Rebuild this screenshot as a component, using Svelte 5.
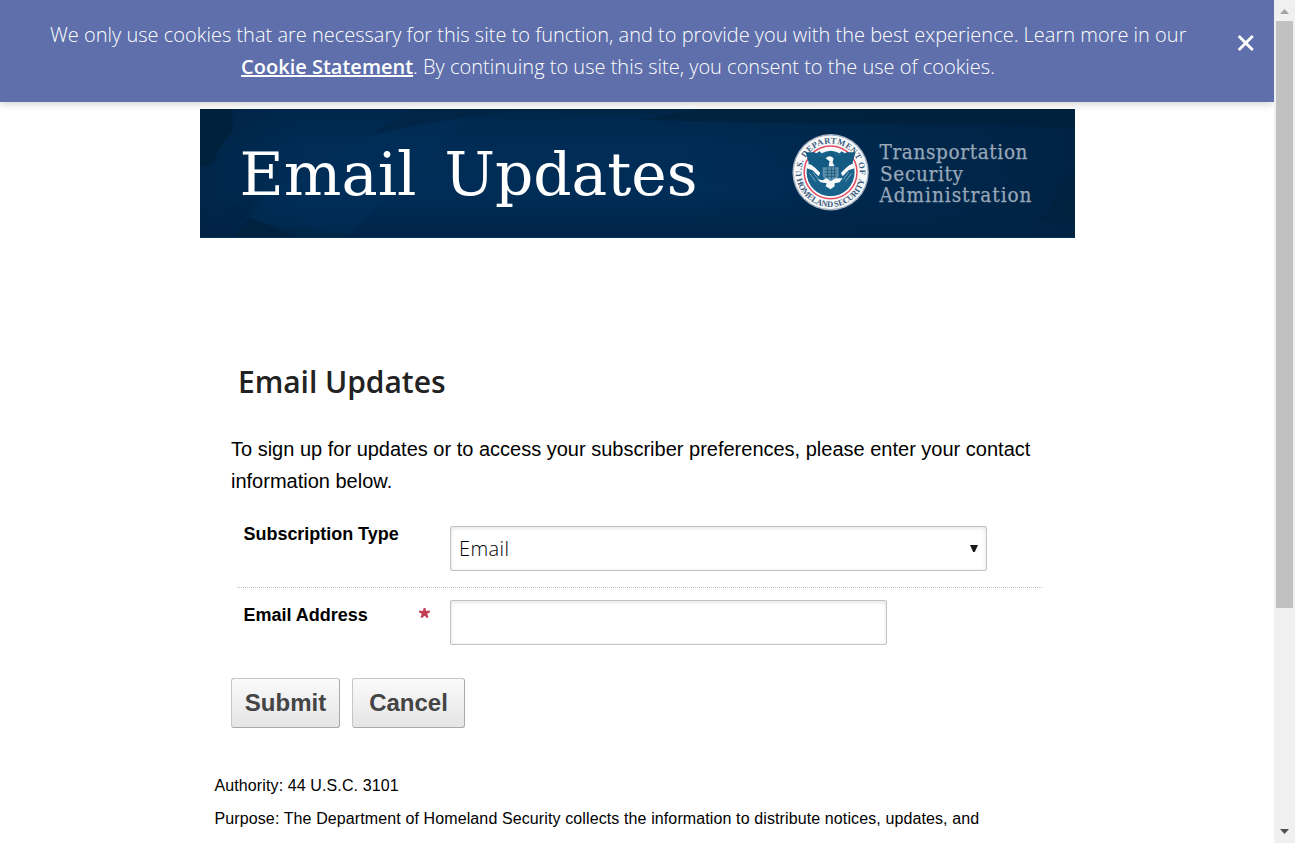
<script>
  const notices = [
    'Authority: 44 U.S.C. 3101',
    'Purpose: The Department of Homeland Security collects the information to distribute notices, updates, and'
  ];
</script>

<div class="window">
  <div class="page">
    <div class="cookies">
      <p>
        <span class="line first">We only use cookies that are necessary for this site to function, and to provide you with the best experience. Learn more in our</span>
        <span class="line second"><a href="#cookies">Cookie Statement</a>. By continuing to use this site, you consent to the use of cookies.</span>
      </p>
      <svg class="close" width="18" height="18" viewBox="0 0 18 18"><path d="M1.8 1.8L16.2 16.2M16.2 1.8L1.8 16.2" stroke="#fff" stroke-width="3" /></svg>
    </div>

    <svg class="banner" width="875" height="129" viewBox="0 0 875 129">
      <defs>
        <linearGradient id="base" x1="0" y1="0" x2="0" y2="1">
          <stop offset="0" stop-color="#00274b" />
          <stop offset=".3" stop-color="#002c55" />
          <stop offset=".65" stop-color="#002d57" />
          <stop offset="1" stop-color="#002446" />
        </linearGradient>
        <linearGradient id="side" x1="0" y1="0" x2="1" y2="0">
          <stop offset=".55" stop-color="#002344" stop-opacity="0" />
          <stop offset="1" stop-color="#002344" />
        </linearGradient>
        <linearGradient id="left" x1="0" y1="0" x2="1" y2="0">
          <stop offset="0" stop-color="#002344" stop-opacity=".8" />
          <stop offset=".12" stop-color="#002344" stop-opacity="0" />
        </linearGradient>
        <path id="arc-top" d="M-28.9 4.5A29.2 29.2 0 1 1 28.9 4.5" />
        <path id="arc-bottom" d="M-34 7A34.7 34.7 0 0 0 34 7" />
      </defs>
      <rect width="875" height="129" fill="url(#base)" />
      <rect width="875" height="129" fill="url(#side)" />
      <rect width="875" height="129" fill="url(#left)" />
      <path d="M0 0H32L33 22Q19 36 14 54L0 58Z" fill="#00213a" opacity=".9" />
      <path d="M32 0L42 67L12 100V60Q20 30 34 22Z" fill="#00284e" opacity=".3" />
      <path d="M0 116L60 84L33 129H0Z" fill="#002448" opacity=".4" />
      <path d="M33 129L50 109Q72 119 101 120L150 124L147 129Z" fill="#00213b" opacity=".75" />
      <path d="M50 109L66 86L170 26L270 6L147 129H101Z" fill="#00305c" opacity=".35" />
      <path d="M211 0H330L225 14L170 26Z" fill="#00223d" opacity=".5" />
      <path d="M270 0Q350 5 440 6L560 12H875V0Z" fill="#00243f" opacity=".5" />
      <path d="M500 0H875V18Q660 16 440 11Z" fill="#002039" opacity=".65" />
      <path d="M875 66Q856 68 854 90Q850 107 834 110L875 113Z" fill="#00223f" opacity=".8" />
      <rect y="128" width="875" height="1" fill="#00305f" />
      <g class="title">
        <text x="39.5" y="85.5" textLength="177" lengthAdjust="spacingAndGlyphs">Email</text>
        <text x="244.5" y="85.5" textLength="253" lengthAdjust="spacingAndGlyphs">Updates</text>
      </g>
      <g transform="translate(630.6 63.3)">
        <circle r="38.2" fill="#a7b2c2" />
        <circle r="36.8" fill="#f8f9fa" />
        <g class="seal-text">
          <text><textPath href="#arc-top" textLength="98">U.S. DEPARTMENT OF</textPath></text>
          <text><textPath href="#arc-bottom" textLength="94">HOMELAND SECURITY</textPath></text>
        </g>
        <circle r="26.4" fill="#fff" stroke="#e24d63" stroke-width="1.5" />
        <circle r="24" fill="#17618a" />
        <path d="M-24 -9L-18 -7L-10 0L-12 4L-18 -2L-24 -4ZM24 -9L18 -7L10 0L12 4L18 -2L24 -4Z" fill="#f8f9fa" />
        <path d="M-12 -22Q0 -28 12 -22L9 -19Q0 -24 -9 -19Z" fill="#f8f9fa" />
        <path d="M-25 -20L-16 -20L-10 -16L-4 -15L-5 -18L0 -21L5 -17L4 -15L10 -16L16 -20L25 -20L22 -10L15 -4L10 1L6 3H-6L-11 0L-15 -4L-22 -10Z" fill="#145b83" />
        <path d="M-5 -14Q-1 -18 3 -14L2 -10L4 -6H-2L-1 -11Z" fill="#f4f8fa" />
        <path d="M-8 -5H8V3Q7 8 0 11Q-7 8 -8 3Z" fill="#5b8fab" />
        <path d="M-6 -2H6M-6 1H6M-5 4H5M-3 -5V6M1 -5V7M4 -5V5" stroke="#245f82" />
        <path d="M-21 1L-15 9M-18 0L-12 7M21 1L15 9M18 0L13 7" stroke="#9fc0cf" stroke-width=".7" />
        <path d="M-13 7L-8 8L-4 6L0 9L5 6L12 6L9 10L4 11L4 14L0 17L-5 14L-4 11L-10 10Z" fill="#f7fafb" />
      </g>
      <g class="agency">
        <text x="679.5" y="50" textLength="148">Transportation</text>
        <text x="680" y="71.5" textLength="83">Security</text>
        <text x="679.5" y="92.5" textLength="152">Administration</text>
      </g>
    </svg>

    <main>
      <h1>Email Updates</h1>
      <p class="intro">To sign up for updates or to access your subscriber preferences, please enter your contact information below.</p>
      <div class="form">
        <div class="row type">
          <div class="label">Subscription Type</div>
          <div class="field select"><span>Email</span><svg width="8" height="7" viewBox="0 0 8 7"><path d="M0 0H8L4.8 7H3.2Z" fill="#1a1a1a" /></svg></div>
        </div>
        <div class="row address">
          <div class="label">Email Address
            <svg width="11" height="10" viewBox="0 0 11 10"><path d="M4.6 0H6.4L7.1 2.9L10.7 2.6L11 4.2L8.2 5.8L9.4 9.2L8 9.9L5.5 7.8L3 9.9L1.6 9.2L2.8 5.8L0 4.2L.3 2.6L3.9 2.9Z" fill="#c13c54" /></svg>
          </div>
          <div class="field"></div>
        </div>
      </div>
      <div class="actions">
        <div class="button submit">Submit</div>
        <div class="button cancel">Cancel</div>
      </div>
      <div class="notices">
        {#each notices as notice}
          <p>{notice}</p>
        {/each}
      </div>
    </main>
  </div>

  <div class="scrollbar">
    <svg width="21" height="21" viewBox="0 0 21 21"><path d="M6 14L10.5 9L15 14Z" fill="#a3a3a3" /></svg>
    <div class="thumb"></div>
    <svg width="21" height="21" viewBox="0 0 21 21"><path d="M6 7L10.5 12L15 7Z" fill="#505050" /></svg>
  </div>
</div>

<style>
  :global(body) { background: #fff; overflow: hidden; }
  p, h1 { margin: 0; }
  .window { display: flex; width: 1295px; height: 843px; overflow: hidden; font-family: "Liberation Sans", Arial, sans-serif; color: #000; }
  .page { width: 1274px; height: 843px; overflow: hidden; }
  .cookies { display: flex; height: 102px; box-sizing: border-box; padding: 19px 20px 0 50px; background: #5e6fab; box-shadow: 0 2px 8px rgba(0, 0, 0, .18); color: #fff; font: 300 20px/32px "Open Sans", sans-serif; }
  .cookies p { width: 1136px; }
  .line { display: block; text-align: center; white-space: nowrap; }
  .cookies a { color: #fff; font-weight: 600; text-decoration: underline; }
  .close { margin: 14.5px 0 0 50.5px; }
  .banner { display: block; margin: 7px 0 0 200px; position: relative; }
  .title { fill: #fff; font-family: "DejaVu Serif", serif; font-size: 60px; }
  .agency { fill: #98a7b8; stroke: #98a7b8; stroke-width: .25; font-family: "DejaVu Serif Condensed", "DejaVu Serif", serif; font-stretch: condensed; font-size: 20.5px; }
  .seal-text { fill: #385a7d; font: 700 8.5px "Liberation Serif", serif; }
  main { width: 843px; margin-left: 200px; padding-top: 124px; }
  h1 { padding-left: 38px; font: 600 30px/40px "Open Sans", sans-serif; color: #222; letter-spacing: -.05px; }
  .intro { margin: 31px 0 0 31px; width: 805px; font-size: 20px; line-height: 32px; }
  .form { margin-left: 37px; width: 805px; }
  .row { display: flex; box-sizing: border-box; }
  .type { height: 91px; padding-top: 29px; border-bottom: 1px dotted #bcbcbc; }
  .address { padding-top: 12px; }
  .label { display: flex; width: 206px; padding-left: 6.5px; box-sizing: border-box; font-weight: 700; font-size: 18px; line-height: 20px; }
  .address .label { padding-top: 5px; }
  .label svg { margin: 3px 13px 0 auto; flex: none; }
  .type .label { margin-top: -2px; letter-spacing: -.03px; }
  .field { width: 437px; height: 45px; box-sizing: border-box; border: 1px solid #c2c2c2; border-radius: 2px; box-shadow: inset 0 1px 4px rgba(0, 0, 0, .12); margin-left: 7px; }
  .select { width: 537px; display: flex; align-items: center; justify-content: space-between; padding: 0 8px; font: 300 20px/30px "Open Sans", sans-serif; letter-spacing: .4px; }
  .actions { display: flex; gap: 12px; margin: 33px 0 0 31px; }
  .button { height: 50px; box-sizing: border-box; border: 1px solid #bfbfbf; border-color: #c6c6c6 #a9a9a9 #a9a9a9 #c6c6c6; border-radius: 3px; background: linear-gradient(#fafafa, #e5e5e5); color: #444; text-align: center; font-size: 24px; line-height: 47px; font-weight: 700; }
  .submit { width: 109px; }
  .cancel { width: 113px; }
  .notices { margin: 41px 0 0 14.5px; font-size: 16px; line-height: 33px; letter-spacing: .112px; white-space: nowrap; }
  .scrollbar { width: 21px; background: #f0f0f0; display: flex; flex-direction: column; align-items: center; }
  .scrollbar svg { display: block; }
  .thumb { width: 17px; height: 587px; background: #c1c1c1; margin-bottom: 214px; }
</style>
